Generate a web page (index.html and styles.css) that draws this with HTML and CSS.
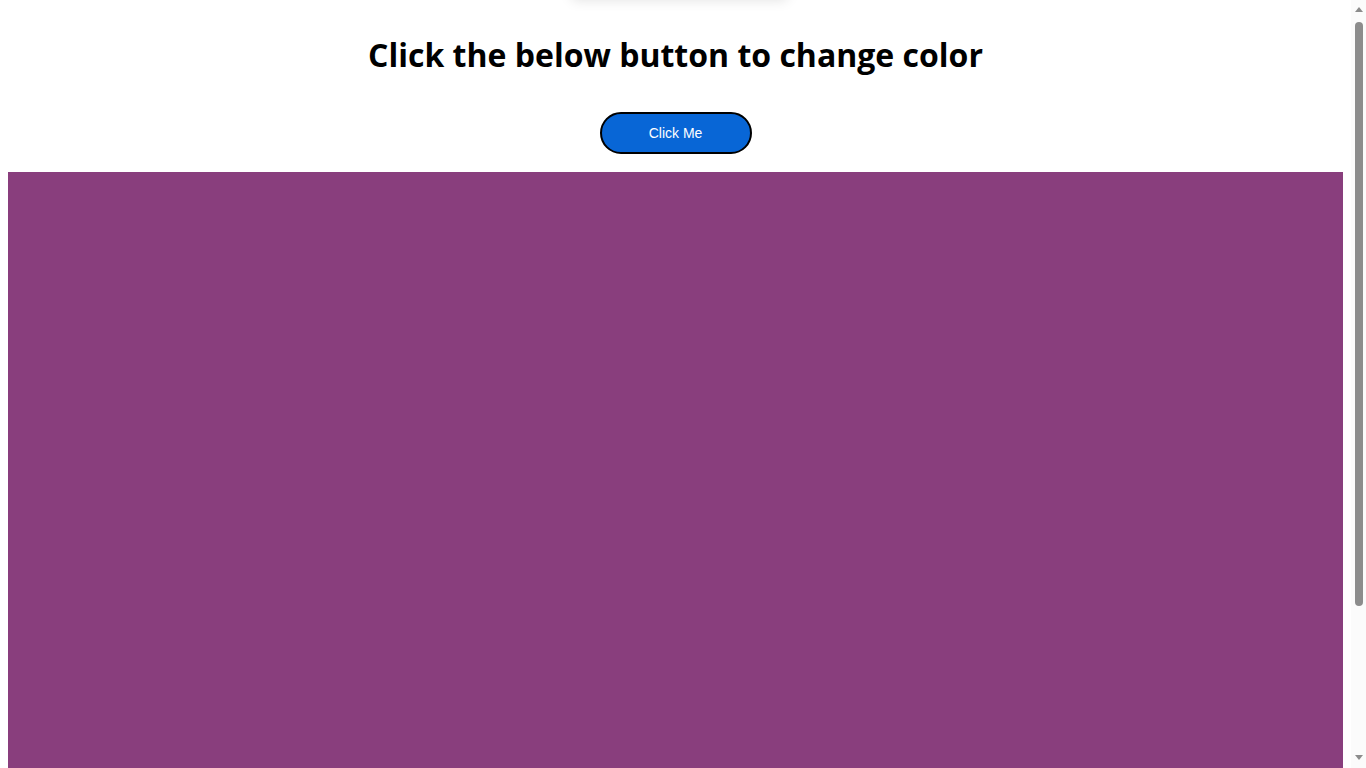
FILE: index.html
```html
<!DOCTYPE html>
<html>
<head>
<meta charset="utf-8">
<title>Change color</title>
<link rel="stylesheet" href="styles.css">
</head>
<body>
<div class="top-shadow"></div>
<div class="header">
  <h1 class="title">Click the below button to change color</h1>
  <button class="btn">Click Me</button>
</div>
<div class="box"></div>
<div class="scrollbar">
  <span class="arrow arrow-up"></span>
  <span class="thumb"></span>
  <span class="track-rest"></span>
  <span class="arrow arrow-down"></span>
</div>
</body>
</html>
```
FILE: styles.css
```css
html, body {
  margin: 0;
  padding: 0;
}
html {
  padding-right: 15px;
}
body {
  margin: 8px;
  background: #ffffff;
  font-family: "Open Sans", sans-serif;
}
.top-shadow {
  position: absolute;
  left: 572px;
  top: -40px;
  width: 215px;
  height: 40px;
  box-shadow: 0 0 12px rgba(0, 0, 0, 0.12);
  background: #fff;
}
.header {
  display: flex;
  flex-direction: column;
  align-items: center;
  padding-top: 25px;
}
.title {
  margin: 0;
  font-family: "Open Sans", sans-serif;
  font-weight: 700;
  font-size: 32px;
  line-height: 44px;
  color: #000;
}
.btn {
  margin-top: 35px;
  width: 152px;
  height: 42px;
  border: 2px solid #000;
  border-radius: 21px;
  background: #0866d6;
  color: #fff;
  font-family: "Liberation Sans", Arial, sans-serif;
  font-size: 14px;
  cursor: pointer;
}
.box {
  margin-top: 18px;
  height: 800px;
  background: #893e7d;
}
.scrollbar {
  position: fixed;
  top: 0;
  right: 0;
  width: 15px;
  height: 100vh;
  background: #fbfbfb;
  display: flex;
  flex-direction: column;
  align-items: center;
}
.arrow {
  width: 0;
  height: 0;
  border-left: 4px solid transparent;
  border-right: 4px solid transparent;
  flex: none;
}
.arrow-up {
  margin-top: 7px;
  border-bottom: 5px solid #8c8c8c;
}
.arrow-down {
  margin-bottom: 8px;
  border-top: 5px solid #8c8c8c;
}
.thumb {
  margin-top: 10px;
  width: 8px;
  height: 584px;
  border-radius: 4px;
  background: #8c8c8c;
  flex: none;
}
.track-rest {
  flex: 1;
}
```
